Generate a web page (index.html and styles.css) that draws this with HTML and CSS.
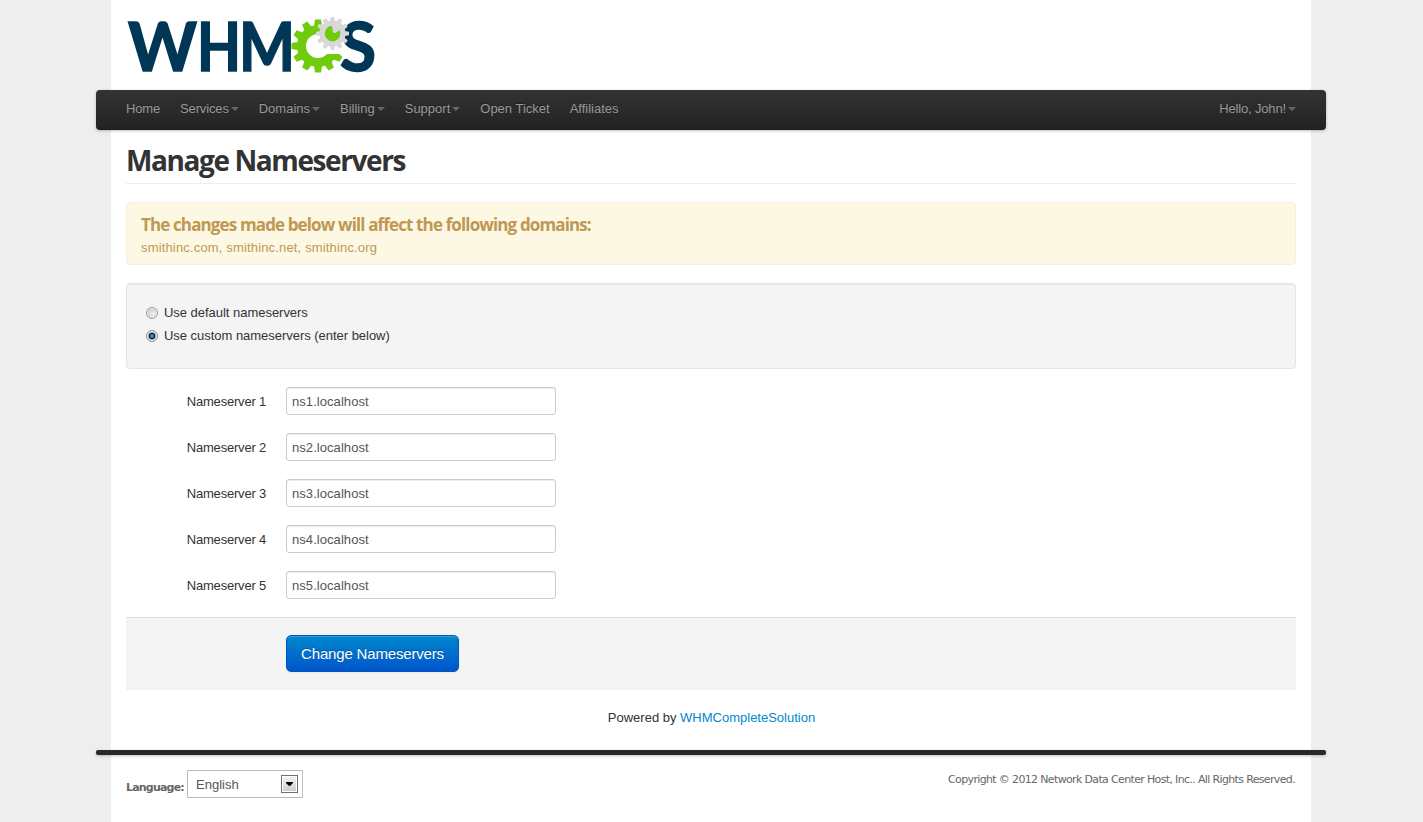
FILE: index.html
```
<!DOCTYPE html>
<html lang="en">
<head>
<meta charset="utf-8">
<title>Manage Nameservers</title>
<link rel="stylesheet" href="styles.css">
</head>
<body>
<div class="page">
  <header class="logo">
    <svg class="logo-art" width="250" height="60" viewBox="127 14 250 60" role="img" aria-label="WHMCS">
      <g class="logo-text">
        <text x="128" y="70.500" textLength="69" lengthAdjust="spacingAndGlyphs">W</text>
        <text x="197" y="70.500" textLength="44" lengthAdjust="spacingAndGlyphs">H</text>
        <text x="239" y="70.500" textLength="56" lengthAdjust="spacingAndGlyphs">M</text>
        <text x="340" y="70.500" textLength="36" lengthAdjust="spacingAndGlyphs">S</text>
      </g>
      <g transform="translate(318 46)">
        <circle r="16.500" fill="none" stroke="#70cb0c" stroke-width="9"/>
        <g fill="#70cb0c">
          <path id="t" d="M-4-20L-3-26.500H3L4-20Z"/>
          <use href="#t" transform="rotate(120)"/><use href="#t" transform="rotate(150)"/><use href="#t" transform="rotate(180)"/>
          <use href="#t" transform="rotate(210)"/><use href="#t" transform="rotate(240)"/><use href="#t" transform="rotate(270)"/>
          <use href="#t" transform="rotate(300)"/><use href="#t" transform="rotate(330)"/>
        </g>
        <path d="M5-22H23V8H8Z" fill="#fff"/>
      </g>
      <g transform="translate(332.500 33.500)">
        <circle r="13" fill="#d8d8d8"/>
        <g fill="#d8d8d8">
          <path id="g" d="M-2.500-12L-1.800-16.500H1.800L2.500-12Z"/>
          <use href="#g" transform="rotate(30)"/><use href="#g" transform="rotate(60)"/><use href="#g" transform="rotate(90)"/>
          <use href="#g" transform="rotate(120)"/><use href="#g" transform="rotate(150)"/><use href="#g" transform="rotate(180)"/>
          <use href="#g" transform="rotate(210)"/><use href="#g" transform="rotate(240)"/><use href="#g" transform="rotate(270)"/>
          <use href="#g" transform="rotate(300)"/><use href="#g" transform="rotate(330)"/>
        </g>
        <path d="M-1-7.700A7.800 7.800 0 1 0 7-3.500L3-.500Q0 0 0-3Q1-5-1-7.700Z" fill="#70cb0c"/>
      </g>
    </svg>
  </header>

  <nav class="navbar">
    <a class="tight">Home</a>
    <a class="tight">Services<i class="caret"></i></a>
    <a>Domains<i class="caret"></i></a>
    <a>Billing<i class="caret"></i></a>
    <a>Support<i class="caret"></i></a>
    <a>Open Ticket</a>
    <a>Affiliates</a>
    <a class="account tight">Hello, John!<i class="caret"></i></a>
  </nav>

  <main>
    <h1>Manage Nameservers</h1>
    <div class="alert">
      <h2>The changes made below will affect the following domains:</h2>
      <p>smithinc.com, smithinc.net, smithinc.org</p>
    </div>
    <form>
      <div class="well">
        <label><input type="radio" name="ns">Use default nameservers</label>
        <label><input type="radio" name="ns" checked>Use custom nameservers (enter below)</label>
      </div>
      <div class="row"><label for="ns1">Nameserver 1</label><input id="ns1" type="text" value="ns1.localhost"></div>
      <div class="row"><label for="ns2">Nameserver 2</label><input id="ns2" type="text" value="ns2.localhost"></div>
      <div class="row"><label for="ns3">Nameserver 3</label><input id="ns3" type="text" value="ns3.localhost"></div>
      <div class="row"><label for="ns4">Nameserver 4</label><input id="ns4" type="text" value="ns4.localhost"></div>
      <div class="row"><label for="ns5">Nameserver 5</label><input id="ns5" type="text" value="ns5.localhost"></div>
      <div class="actions"><button type="button">Change Nameservers</button></div>
    </form>
    <p class="powered">Powered by <a>WHMCompleteSolution</a></p>
  </main>

  <div class="divider"></div>
  <footer>
    <div class="language">
      <strong>Language:</strong>
      <div class="select"><span>English</span><span class="drop"><svg width="7" height="4" viewBox="0 0 7 4"><path d="M0 0H7V1L4 4H3L0 1Z"/></svg></span></div>
    </div>
    <p class="copyright">Copyright © 2012 Network Data Center Host, Inc.. All Rights Reserved.</p>
  </footer>
</div>
</body>
</html>
```
FILE: styles.css
```
* { box-sizing: border-box; }
body {
  margin: 0;
  background: #eee;
  color: #333;
  font: 13px/18px "Liberation Sans", Arial, sans-serif;
  overflow: hidden;
}
h1, h2, p { margin: 0; }
.page {
  width: 1200px;
  height: 822px;
  margin-left: 111px;
  padding: 0 15px;
  background: #fff;
}
.logo { height: 90px; padding: 14px 0 0 1px; }
.logo-art { display: block; overflow: visible; }
.logo-text {
  font: 700 66px Lato, sans-serif;
  fill: #003756;
  stroke: #003756;
  stroke-width: 1.6px;
}
.navbar {
  display: flex;
  align-items: flex-start;
  gap: 20px;
  height: 40px;
  margin: 0 -30px;
  padding: 10px 30px 0;
  border-radius: 4px;
  background: linear-gradient(#333, #222);
  box-shadow: 0 1px 3px rgba(0,0,0,.25), inset 0 -1px 0 rgba(0,0,0,.1);
  color: #999;
  text-shadow: 0 -1px 0 rgba(0,0,0,.25);
}
.navbar a { display: flex; white-space: nowrap; }
.navbar .tight { letter-spacing: -.15px; }
.account { margin-left: auto; }
.caret {
  width: 8px;
  height: 4px;
  margin: 7px 0 0 2px;
  border: 4px solid transparent;
  border-top-color: #666;
  border-bottom: 0;
}
h1 {
  height: 54px;
  padding-top: 12px;
  border-bottom: 1px solid #eee;
  font: 700 28px/36px "Open Sans", sans-serif;
  letter-spacing: -1.4px;
}
.alert {
  height: 63px;
  margin-top: 18px;
  padding: 13px 14px 0;
  border: 1px solid #fbeed5;
  border-radius: 4px;
  background: #fcf8e3;
  color: #c09853;
}
.alert h2 {
  font: 700 17px/18px "Open Sans", sans-serif;
  letter-spacing: -.87px;
}
.alert p { margin-top: 5px; letter-spacing: .16px; }
.well {
  height: 86px;
  margin: 18px 0;
  padding: 20px 19px;
  border: 1px solid #e5e5e5;
  border-radius: 4px;
  background: #f4f4f4;
  box-shadow: inset 0 1px 1px rgba(0,0,0,.05);
}
.well label { display: flex; margin-bottom: 5px; letter-spacing: -.03px; }
.well input {
  appearance: none;
  width: 12px;
  height: 12px;
  margin: 3px 6px 0 0;
  border: 1px solid #999;
  border-radius: 50%;
  background: radial-gradient(circle at 60% 60%, #eee, #bbb);
  box-shadow: inset 0 0 0 1px #f4f4f4;
}
.well input:checked { background: radial-gradient(circle, #58bfe8 0, #16587e 2px, #102b42 3px, #ccc 4px); }
.row { display: flex; height: 28px; margin-bottom: 18px; }
.row label { width: 140px; margin-right: 20px; padding-top: 6px; text-align: right; letter-spacing: -.2px; }
.row input {
  width: 270px;
  height: 28px;
  padding: 4px 5px;
  border: 1px solid #ccc;
  border-radius: 3px;
  box-shadow: inset 0 1px 1px rgba(0,0,0,.075);
  color: #555;
  font: inherit;
  letter-spacing: .06px;
}
.actions {
  height: 73px;
  padding: 17px 160px;
  border-top: 1px solid #ddd;
  background: #f4f4f4;
}
button {
  display: block;
  width: 173px;
  height: 37px;
  padding: 0;
  border: 1px solid #0055bb;
  border-radius: 5px;
  background: linear-gradient(#08c, #05c);
  box-shadow: inset 0 1px 0 rgba(255,255,255,.2), 0 1px 2px rgba(0,0,0,.05);
  color: #fff;
  font: 15px/20px "Liberation Sans", Arial, sans-serif;
  letter-spacing: -.17px;
  text-shadow: 0 -1px 0 rgba(0,0,0,.25);
}
.powered { height: 60px; padding: 19px 0 0 1px; text-align: center; }
.powered a { color: #08c; }
.divider {
  height: 5px;
  margin: 0 -30px;
  border-radius: 2px;
  background: #292929;
  box-shadow: 0 1px 3px rgba(0,0,0,.25);
}
footer {
  display: flex;
  justify-content: space-between;
  padding-top: 15px;
  color: #666;
  font: 11px/18px "DejaVu Sans", sans-serif;
}
.language { display: flex; gap: 3px; }
.language strong { width: 58px; padding-top: 9px; letter-spacing: -.8px; }
.select {
  display: flex;
  width: 116px;
  height: 28px;
  justify-content: space-between;
  align-items: center;
  padding: 0 4px 0 8px;
  border: 1px solid #bbb;
  background: #fff;
  color: #555;
  font: 13px/18px "Liberation Sans", Arial, sans-serif;
}
.select span:first-child { padding-top: 1px; }
.drop {
  display: flex;
  align-items: center;
  justify-content: center;
  width: 17px;
  height: 18px;
  border: 1px solid #707070;
  background: linear-gradient(#f4f4f4, #ccc);
  box-shadow: inset 0 0 0 1px #fff;
}
.copyright { padding: 1px 1px 0 0; letter-spacing: -.65px; white-space: nowrap; }
```
